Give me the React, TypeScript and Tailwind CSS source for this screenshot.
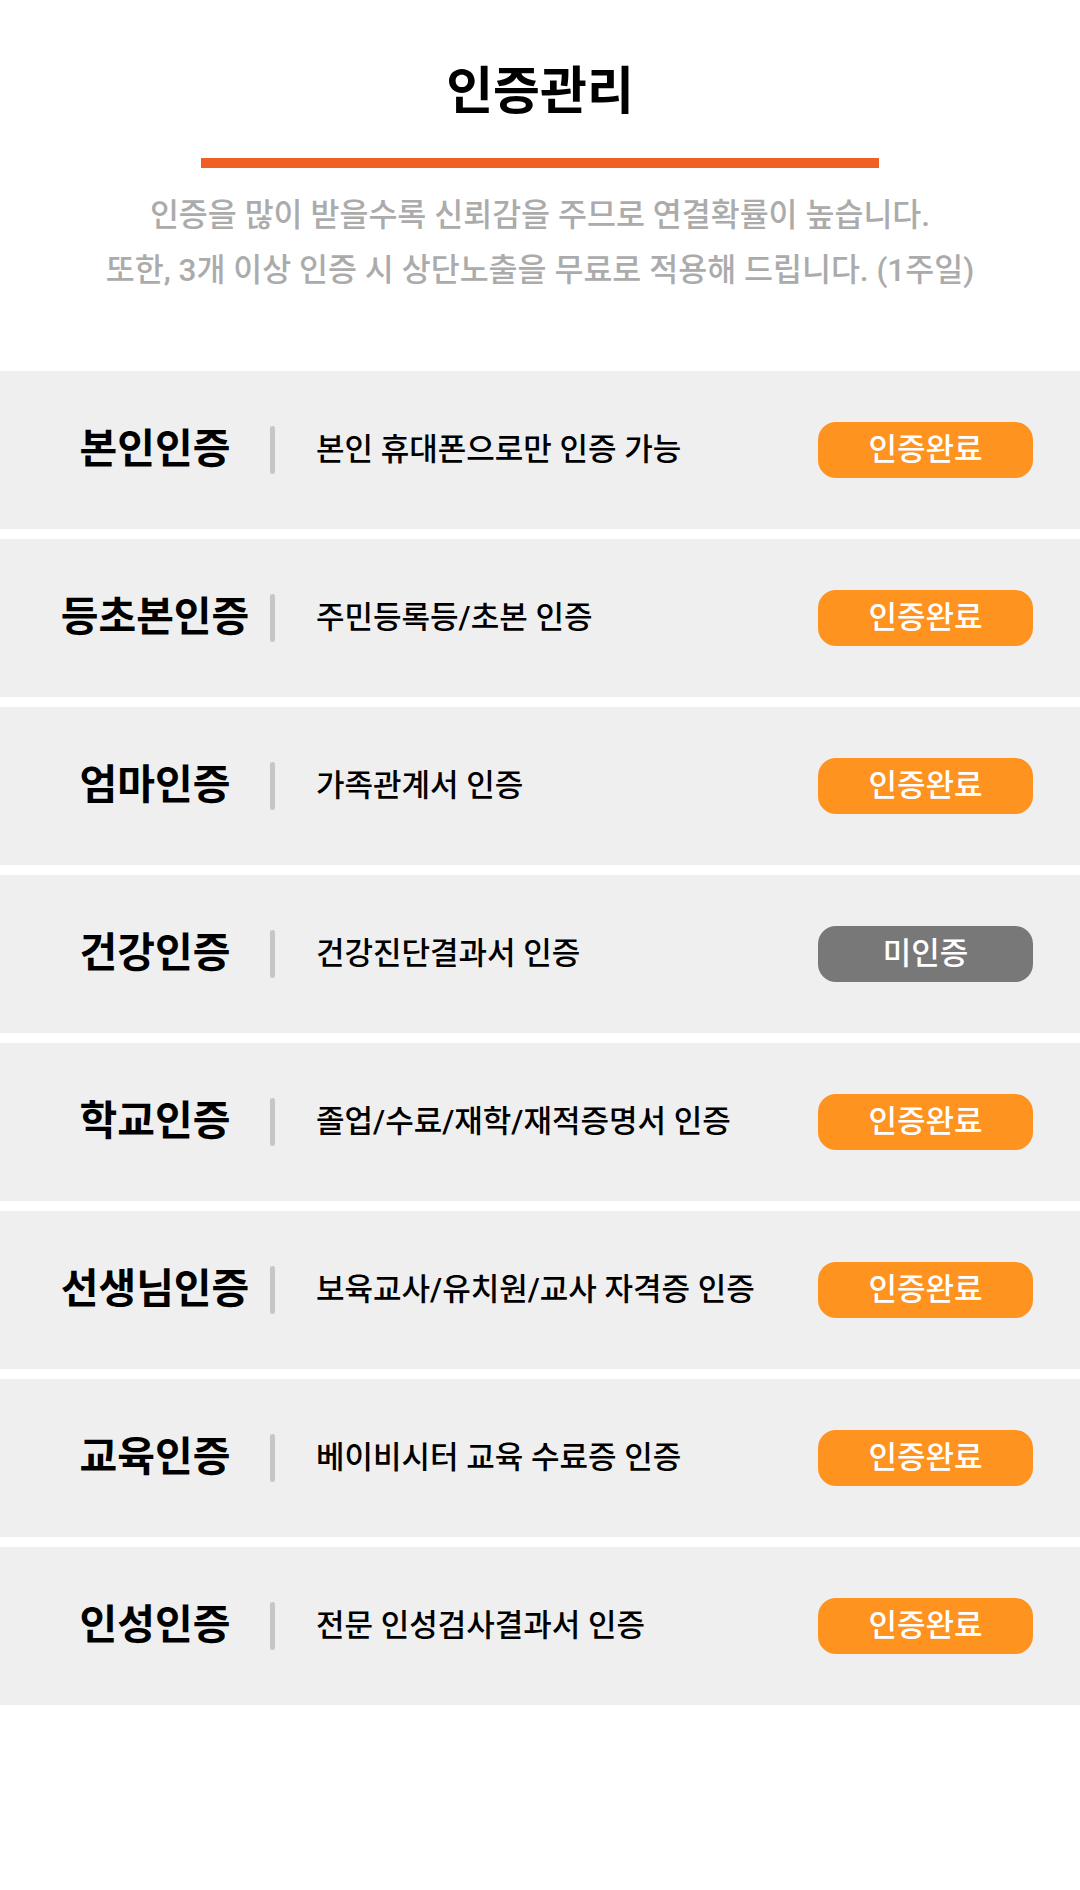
import React from "react";

const rows: { label: string; desc: string; done: boolean }[] = [
  { label: "본인인증", desc: "본인 휴대폰으로만 인증 가능", done: true },
  { label: "등초본인증", desc: "주민등록등/초본 인증", done: true },
  { label: "엄마인증", desc: "가족관계서 인증", done: true },
  { label: "건강인증", desc: "건강진단결과서 인증", done: false },
  { label: "학교인증", desc: "졸업/수료/재학/재적증명서 인증", done: true },
  { label: "선생님인증", desc: "보육교사/유치원/교사 자격증 인증", done: true },
  { label: "교육인증", desc: "베이비시터 교육 수료증 인증", done: true },
  { label: "인성인증", desc: "전문 인성검사결과서 인증", done: true },
];

export default function App() {
  return (
    <div
      className="w-[1080px] min-h-[1890px] bg-white"
      style={{ fontFamily: 'Roboto, "Noto Sans CJK KR", sans-serif' }}
    >
      <div className="pt-[64px] flex flex-col items-center">
        <h1 className="text-[51px] leading-[56px] font-bold text-black">인증관리</h1>
        <div className="mt-[38px] w-[678px] h-[10px] bg-[#f06024]" />
        <div className="mt-[20px] text-center text-[31.5px] leading-[55px] text-[#ababab] font-medium">
          <p>인증을 많이 받을수록 신뢰감을 주므로 연결확률이 높습니다.</p>
          <p>또한, 3개 이상 인증 시 상단노출을 무료로 적용해 드립니다. (1주일)</p>
        </div>
      </div>
      <div className="mt-[73px] flex flex-col gap-[10px]">
        {rows.map((r) => (
          <div key={r.label} className="h-[158px] bg-[#efefef] flex items-center">
            <div className="ml-[40px] w-[230px] text-center text-[41px] font-bold text-black whitespace-nowrap">
              {r.label}
            </div>
            <div className="w-[5px] h-[48px] rounded-full bg-[#c6c6c6]" />
            <div className="ml-[41px] flex-1 text-[31px] font-medium text-black whitespace-nowrap">
              {r.desc}
            </div>
            <div
              className={
                "mr-[47px] w-[215px] h-[56px] rounded-[18px] flex items-center justify-center text-[31px] font-medium text-white " +
                (r.done ? "bg-[#ff9320]" : "bg-[#787878]")
              }
            >
              {r.done ? "인증완료" : "미인증"}
            </div>
          </div>
        ))}
      </div>
    </div>
  );
}
